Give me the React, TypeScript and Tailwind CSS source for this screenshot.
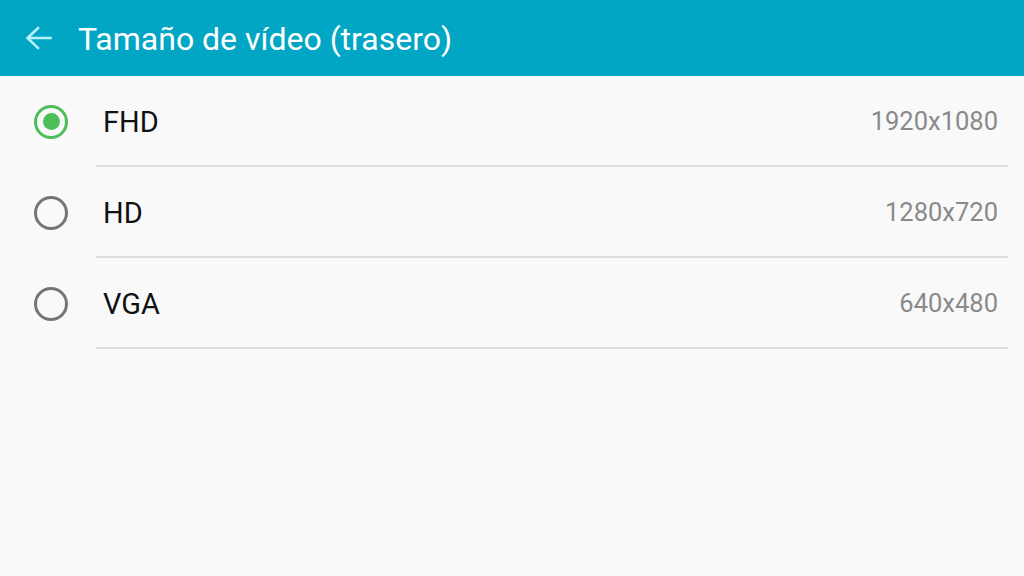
const options = [
  { label: "FHD", size: "1920x1080", selected: true },
  { label: "HD", size: "1280x720", selected: false },
  { label: "VGA", size: "640x480", selected: false },
];

function Radio({ checked }: { checked: boolean }) {
  return (
    <div
      className={`w-[34px] h-[34px] rounded-full border-[3px] flex items-center justify-center ${
        checked ? "border-[#4cbf5b]" : "border-[#757575]"
      }`}
    >
      {checked && <div className="w-[17px] h-[17px] rounded-full bg-[#4cbf5b]" />}
    </div>
  );
}

export default function App() {
  return (
    <div className="w-[1024px] h-[576px] bg-[#f9f9f9] font-['Roboto',_sans-serif] overflow-hidden">
      <header className="h-[76px] bg-[#00a6c4] flex items-center pl-[25px] pt-[2px]">
        <svg width="27" height="24" viewBox="0 0 27 24" fill="none" className="mr-[26px] -mt-[2px]">
          <path
            d="M25.5 12H3M13 2L2.5 12L13 22"
            stroke="#b5f2fc"
            strokeWidth="2.6"
            strokeLinecap="square"
          />
        </svg>
        <h1 className="text-white text-[32px] leading-none">Tamaño de vídeo (trasero)</h1>
      </header>

      <ul>
        {options.map((opt) => (
          <li key={opt.label} className="flex h-[91px]">
            <div className="w-[96px] flex items-center pl-[34px]">
              <Radio checked={opt.selected} />
            </div>
            <div className="flex-1 mr-[16px] flex items-center justify-between border-b-2 border-[#dddddd] pl-[7px] pr-[10px] pt-[3px]">
              <span className="text-[29px] leading-none text-[#111111]">{opt.label}</span>
              <span className="text-[25.5px] leading-none text-[#8a8a8a]">{opt.size}</span>
            </div>
          </li>
        ))}
      </ul>
    </div>
  );
}
